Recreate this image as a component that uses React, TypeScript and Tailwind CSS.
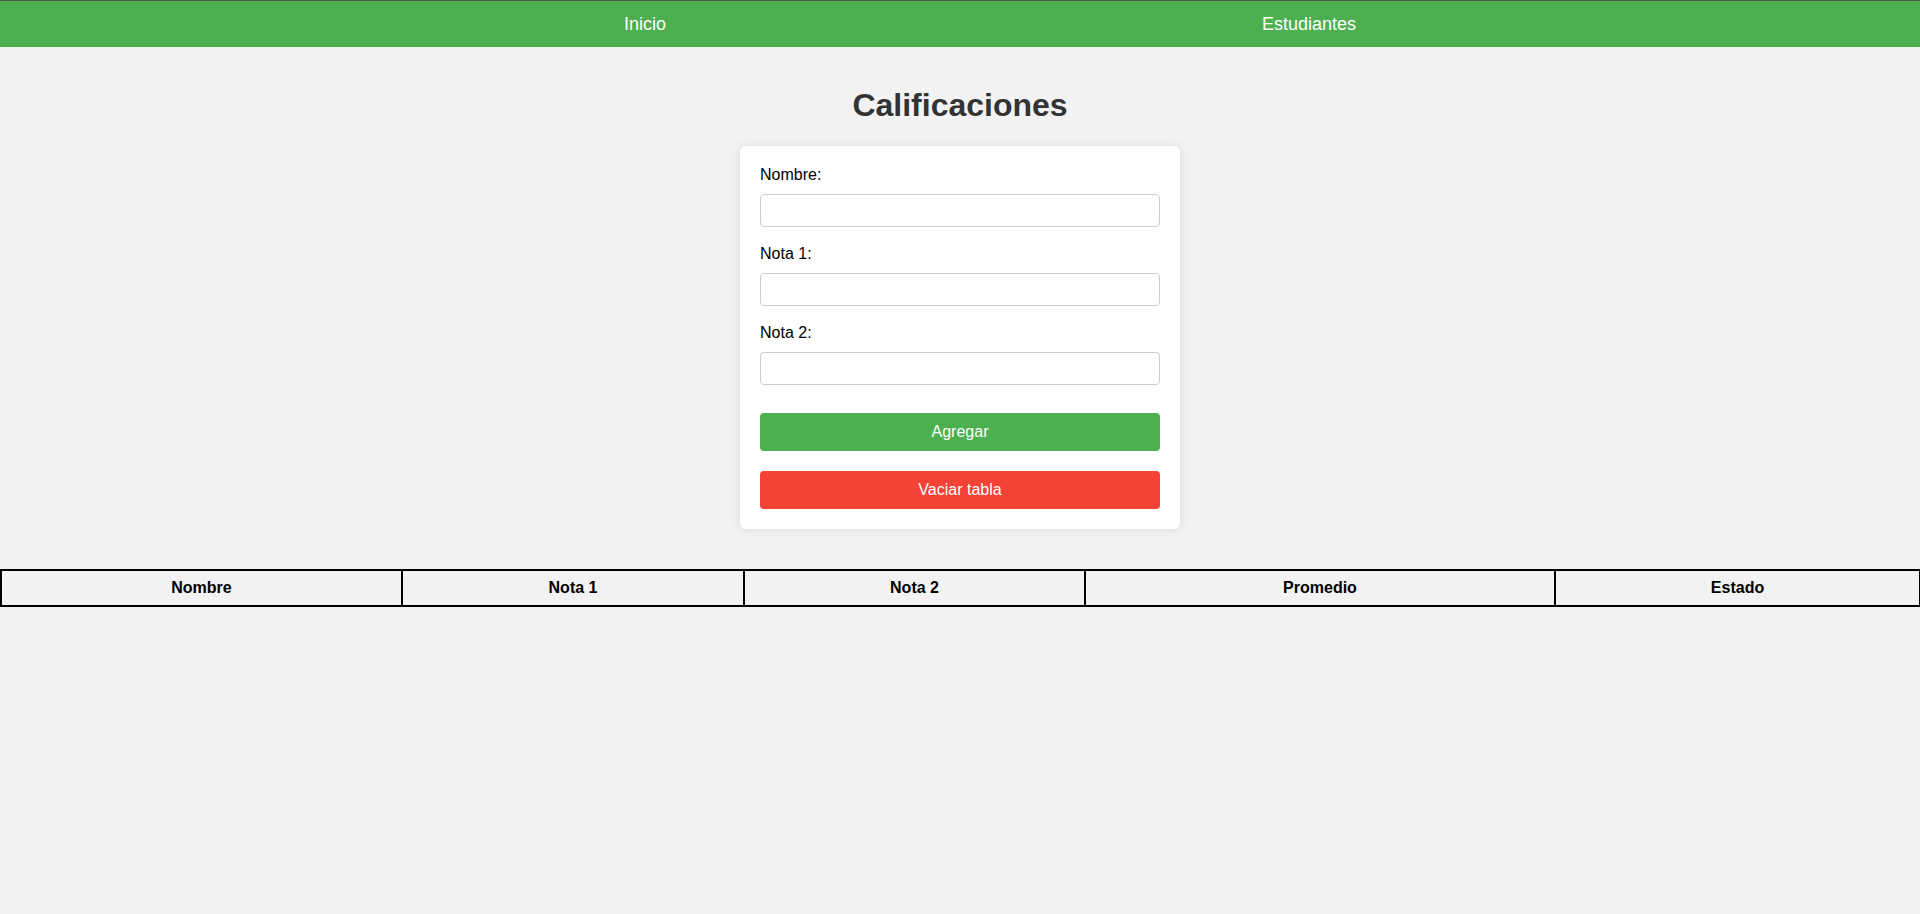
import React, { useState } from 'react';

type Row = { nombre: string; nota1: number; nota2: number };

const columns = [
  { label: 'Nombre', width: 'w-[401px]' },
  { label: 'Nota 1', width: 'w-[342px]' },
  { label: 'Nota 2', width: 'w-[341px]' },
  { label: 'Promedio', width: 'w-[470px]' },
  { label: 'Estado', width: 'w-[365px]' },
];

export default function App() {
  const [nombre, setNombre] = useState('');
  const [nota1, setNota1] = useState('');
  const [nota2, setNota2] = useState('');
  const [rows, setRows] = useState<Row[]>([]);

  const agregar = () => {
    if (!nombre || nota1 === '' || nota2 === '') return;
    setRows([...rows, { nombre, nota1: Number(nota1), nota2: Number(nota2) }]);
    setNombre('');
    setNota1('');
    setNota2('');
  };

  const field = (label: string, value: string, onChange: (v: string) => void) => (
    <div>
      <label className="block text-[16px] leading-[18px] mb-[10px] text-black">{label}</label>
      <input
        value={value}
        onChange={(e) => onChange(e.target.value)}
        className="block w-full h-[33px] px-2 text-[13px] bg-white border border-[#ccc] rounded-[4px] mb-[18px] outline-none"
      />
    </div>
  );

  return (
    <div className="min-h-[914px] bg-[#f2f2f2] font-['Liberation_Sans',Arial,sans-serif]">
      {/* Nav */}
      <nav className="h-[47px] bg-[#4caf50] border-t border-[#555] flex items-center justify-center pl-[60px] gap-[596px]">
        <a className="text-white text-[18px] cursor-pointer">Inicio</a>
        <a className="text-white text-[18px] cursor-pointer">Estudiantes</a>
      </nav>

      {/* Title */}
      <h1 className="text-center text-[32px] font-bold text-[#333] leading-[37px] mt-[40px] mb-[22px]">
        Calificaciones
      </h1>

      {/* Form */}
      <div className="w-[440px] mx-auto bg-white rounded-[6px] shadow-[0_0_10px_rgba(0,0,0,0.1)] p-5">
        {field('Nombre:', nombre, setNombre)}
        {field('Nota 1:', nota1, setNota1)}
        {field('Nota 2:', nota2, setNota2)}
        <button
          type="button"
          onClick={agregar}
          className="block w-full h-[38px] mt-[28px] bg-[#4caf50] text-white text-[16px] rounded-[4px] cursor-pointer"
        >
          Agregar
        </button>
        <button
          type="button"
          onClick={() => setRows([])}
          className="block w-full h-[38px] mt-5 bg-[#f44336] text-white text-[16px] rounded-[4px] cursor-pointer"
        >
          Vaciar tabla
        </button>
      </div>

      {/* Table */}
      <table className="w-[1919px] table-fixed border-collapse mt-10 text-[16px] text-black">
        <thead>
          <tr>
            {columns.map((c) => (
              <th key={c.label} className={`${c.width} border-2 border-black h-[36px] font-bold text-center`}>
                {c.label}
              </th>
            ))}
          </tr>
        </thead>
        <tbody>
          {rows.map((r, i) => {
            const prom = (r.nota1 + r.nota2) / 2;
            return (
              <tr key={i}>
                <td className="border-2 border-black p-2 text-center">{r.nombre}</td>
                <td className="border-2 border-black p-2 text-center">{r.nota1}</td>
                <td className="border-2 border-black p-2 text-center">{r.nota2}</td>
                <td className="border-2 border-black p-2 text-center">{prom.toFixed(1)}</td>
                <td className="border-2 border-black p-2 text-center">{prom >= 3 ? 'Aprobado' : 'Reprobado'}</td>
              </tr>
            );
          })}
        </tbody>
      </table>
    </div>
  );
}
